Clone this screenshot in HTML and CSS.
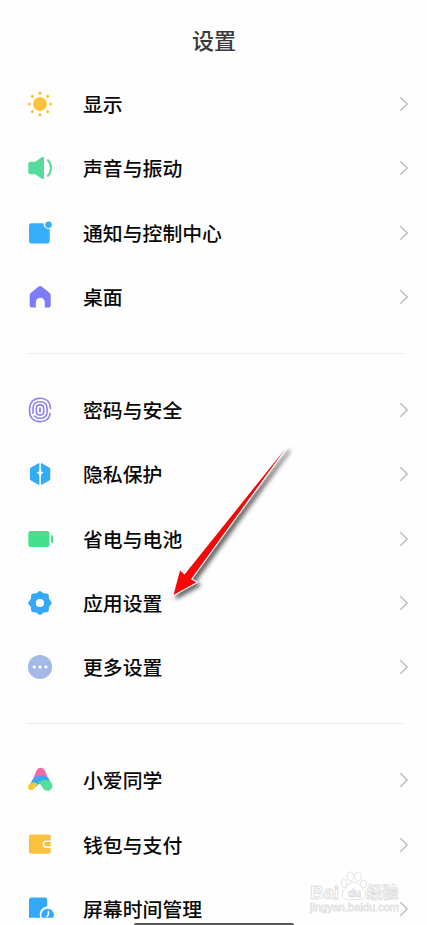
FILE: index.html
```html
<!DOCTYPE html>
<html lang="zh-CN">
<head>
<meta charset="utf-8">
<title>设置</title>
<link rel="stylesheet" href="styles.css">
</head>
<body>
<main class="screen">
  <h1 class="title">设置</h1>
  <ul class="group">
    <li class="row">
      <svg class="icon" viewBox="0 0 30 30" fill="#fcc43c"><circle cx="15" cy="15" r="7"/><circle cx="15" cy="4.2" r="1.6"/><circle cx="15" cy="25.8" r="1.6"/><circle cx="4.2" cy="15" r="1.6"/><circle cx="25.8" cy="15" r="1.6"/><circle cx="7.4" cy="7.4" r="1.6"/><circle cx="22.6" cy="7.4" r="1.6"/><circle cx="7.4" cy="22.6" r="1.6"/><circle cx="22.6" cy="22.6" r="1.6"/></svg>
      <span class="label">显示</span>
      <svg class="chevron" viewBox="0 0 10 16"><path d="M1.3 1.2 8.2 8l-6.9 6.8"/></svg>
    </li>
    <li class="row">
      <svg class="icon" viewBox="0 0 30 30"><path d="M5 8.8h5.3l6-4.4q2.7-1.6 2.7 1v19.2q0 2.6-2.7 1l-6-4.4H5q-1.7 0-1.7-1.7v-9q0-1.7 1.7-1.7z" fill="#55dc9b"/><path d="M23 7.2c3.900 4.200 3.900 11.400 0 15.600" fill="none" stroke="#55dc9b" stroke-width="2" stroke-linecap="round"/></svg>
      <span class="label">声音与振动</span>
      <svg class="chevron" viewBox="0 0 10 16"><path d="M1.3 1.2 8.2 8l-6.9 6.8"/></svg>
    </li>
    <li class="row">
      <svg class="icon" viewBox="0 0 30 30" fill="#36aef8"><path d="M6.200 5.200H18.700C18.500 8.800 20.400 11 24.700 10.800V23.200q0 2.200-2.200 2.200H6.200Q4 25.400 4 23.200V7.400q0-2.200 2.200-2.200z"/><circle cx="23.500" cy="6.800" r="3.300"/></svg>
      <span class="label">通知与控制中心</span>
      <svg class="chevron" viewBox="0 0 10 16"><path d="M1.3 1.2 8.2 8l-6.9 6.8"/></svg>
    </li>
    <li class="row">
      <svg class="icon" viewBox="0 0 30 30"><path d="M13.700 4.500q1.500-1 3 0l7.700 6.200q1.300 1 1.300 2.700v10.200q0 2-2 2h-3.900v-5.300a4.500 4.500 0 0 0-9 0v5.300H6.700q-2 0-2-2V13.400q0-1.700 1.300-2.700z" fill="#7d7cf7"/></svg>
      <span class="label">桌面</span>
      <svg class="chevron" viewBox="0 0 10 16"><path d="M1.3 1.2 8.2 8l-6.9 6.8"/></svg>
    </li>
  </ul>
  <hr class="divider">
  <ul class="group">
    <li class="row">
      <svg class="icon" viewBox="0 0 30 30" fill="none" stroke="#8d83ee" stroke-width="1.600" stroke-linecap="round"><path d="M25.500 13.500C25.300 7.200 21.500 3.300 15 3.300S4.600 7.500 4.600 14v2.200C4.600 22.500 8.500 26.600 15 26.600c5.600 0 9.300-3 10.200-8"/><path d="M8 18.200v-5C8 9 10.700 6.700 15 6.700s7.100 2.500 7.100 6.700v3c0 4.300-2.800 6.900-7.100 6.900-2.400 0-4.300-.7-5.500-2.200"/><path d="M18.700 16.500c0 2.300-1.300 3.600-3.700 3.600s-3.700-1.300-3.700-3.600v-3.100c0-2.300 1.300-3.500 3.700-3.500s3.700 1.200 3.700 3.500z"/><path d="M15 13.500v3" stroke-width="2"/></svg>
      <span class="label">密码与安全</span>
      <svg class="chevron" viewBox="0 0 10 16"><path d="M1.3 1.2 8.2 8l-6.9 6.8"/></svg>
    </li>
    <li class="row">
      <svg class="icon" viewBox="0 0 30 30"><path d="M13.500 4.200q.8-.4.800.6v5.200c-.2 2.200-1 3.100-3.100 3.600 2.200.5 2.900 1.400 3.100 3.500v8.100q0 .9-.8.500l-7.500-4.300q-1.100-.6-1.100-1.700V10.200q0-1.100 1.100-1.700zM16.700 4.200q-.8-.4-.8.600v5.200c.2 2.200 1 3.100 3.100 3.600-2.200.5-2.900 1.400-3.100 3.500v8.100q0 .9.800.5l7.500-4.300q1.100-.6 1.100-1.700V10.200q0-1.100-1.100-1.700z" fill="#33abf6"/></svg>
      <span class="label">隐私保护</span>
      <svg class="chevron" viewBox="0 0 10 16"><path d="M1.3 1.2 8.2 8l-6.9 6.8"/></svg>
    </li>
    <li class="row">
      <svg class="icon" viewBox="0 0 30 30" fill="#44e18d"><rect x="3.300" y="7" width="21.200" height="16" rx="2.500"/><path d="M26 11h.5q1.500 0 1.500 1.500v5q0 1.500-1.500 1.500H26z"/></svg>
      <span class="label">省电与电池</span>
      <svg class="chevron" viewBox="0 0 10 16"><path d="M1.3 1.2 8.2 8l-6.9 6.8"/></svg>
    </li>
    <li class="row">
      <svg class="icon" viewBox="0 0 30 30"><path transform="translate(-.8 -.25) scale(1.050)" fill-rule="evenodd" d="M13.500 3.700q1.500-1.300 3 0l1.900 1.600 3 .2q1.900.1 2 2l.2 3 1.600 2q1.800 2 0 4l-1.600 1.900-.2 3q-.1 1.900-2 2l-3 .2-1.900 1.700q-1.500 1.300-3 0l-1.900-1.700-3-.2q-1.900-.1-2-2l-.2-3-1.600-1.900q-1.800-2 0-4l1.600-2 .2-3q.1-1.900 2-2l3-.2zM15 10.600a3.900 3.900 0 1 0 0 7.800 3.900 3.900 0 1 0 0-7.800z" fill="#35a9f9"/></svg>
      <span class="label">应用设置</span>
      <svg class="chevron" viewBox="0 0 10 16"><path d="M1.3 1.2 8.2 8l-6.9 6.8"/></svg>
    </li>
    <li class="row">
      <svg class="icon" viewBox="0 0 30 30"><circle cx="15" cy="15" r="12.100" fill="#a5b9e7"/><g fill="#fff"><circle cx="9.300" cy="15" r="1.600"/><circle cx="15.100" cy="15" r="1.600"/><circle cx="20.900" cy="15" r="1.600"/></g></svg>
      <span class="label">更多设置</span>
      <svg class="chevron" viewBox="0 0 10 16"><path d="M1.3 1.2 8.2 8l-6.9 6.8"/></svg>
    </li>
  </ul>
  <hr class="divider">
  <ul class="group">
    <li class="row">
      <svg class="icon" viewBox="0 0 30 30"><path d="M6.800 17 11.300 6q1.500-3.200 4.300-3.200T20 6l4.700 11-8-2z" fill="#f768a0"/><path d="M7.800 14.300c3.300-4.700 12-5.400 15.900-.8l2 5-6.500 1.300c-3.700-2-6-1.100-8 2L4.500 20z" fill="#35aaf1"/><path d="M4.500 18.700c2.300-1.500 5.200-1.600 8.200.2l-3.300 4.300c-1.500 2-3.800 2.500-5.300 1.200-1.500-1.500-1.300-4 .4-5.700z" fill="#f6c633"/><path d="M13.500 17.600c3-3.300 8.800-3.400 11.600-1.300 3.400 2.500 3 8.300-1.100 9.400-2.200.5-4.300-.3-5.700-2-1.500-1.800-2.500-4.400-4.800-6.100z" fill="#55df9b"/></svg>
      <span class="label">小爱同学</span>
      <svg class="chevron" viewBox="0 0 10 16"><path d="M1.3 1.2 8.2 8l-6.9 6.8"/></svg>
    </li>
    <li class="row">
      <svg class="icon" viewBox="0 0 30 30"><rect x="4" y="4.500" width="21.700" height="19.300" rx="2" fill="#fac13d"/><path d="M26 11.300h-4.800a2.900 2.900 0 0 0 0 5.800H26" fill="none" stroke="#fff" stroke-width="1.600"/></svg>
      <span class="label">钱包与支付</span>
      <svg class="chevron" viewBox="0 0 10 16"><path d="M1.3 1.2 8.2 8l-6.9 6.8"/></svg>
    </li>
    <li class="row">
      <svg class="icon" viewBox="0 0 30 30"><path d="M6.500 3.500h13.200q2.500 0 2.500 2.500v6.500a7.900 7.900 0 0 0-6.700 11.300H4V6q0-2.500 2.500-2.500z" fill="#35a8fb"/><path d="M17 23.800a6.300 6.300 0 1 1 11.300 0z" fill="#35a8fb"/><path d="M23.300 16.700v4l-1.800 2.300" fill="none" stroke="#fff" stroke-width="1.500"/></svg>
      <span class="label">屏幕时间管理</span>
      <svg class="chevron" viewBox="0 0 10 16"><path d="M1.3 1.2 8.2 8l-6.9 6.8"/></svg>
    </li>
  </ul>
  <div class="home-bar"></div>
  <svg class="pointer" viewBox="0 0 160 180"><path class="arrow" d="M135.800 18.200 41 149.200l5.500 3.100L23.500 165 30 140.500l4.500 4z"/></svg>
  <svg class="watermark" viewBox="0 0 100 50">
    <text class="mark brand" x="5" y="33" textLength="29">Bai</text>
    <g class="mark"><ellipse cx="39" cy="17.500" rx="3" ry="4" transform="rotate(-15 39 17.500)"/><ellipse cx="45.500" cy="10.500" rx="3.200" ry="4.500"/><ellipse cx="53" cy="10.500" rx="3.200" ry="4.500"/><ellipse cx="58.500" cy="18" rx="3" ry="4" transform="rotate(15 58.500 18)"/><path d="M43 19q6-6 12 0 2 3 5 6 3 8-5 8.500H42q-7-1-4-8.500 3-3 5-6z"/></g>
    <text class="mark du" x="43" y="31" textLength="13">du</text>
    <text class="mark cn" x="61.500" y="32">经验</text>
    <text class="mark url" x="5" y="44.500" textLength="89">jingyan.baidu.com</text>
  </svg>
</main>
</body>
</html>
```
FILE: styles.css
```css
* { box-sizing: border-box; }
body { margin: 0; background: #fefefe; font-family: "Noto Sans CJK SC", sans-serif; }
.screen { position: relative; height: 925px; overflow: hidden; }
.title { margin: 0; height: 71.9px; padding: 8px 0 0 1px; text-align: center; font-size: 22px; line-height: 62px; font-weight: 500; color: #3a3a3a; }
.group { list-style: none; margin: 0; padding: 0; }
.row { display: flex; align-items: center; height: 64.25px; padding: 0 18px 0 25px; }
.icon { width: 30px; height: 30px; flex: none; }
.label { flex: 1; margin-left: 28px; font-size: 19.85px; line-height: 30px; font-weight: 500; color: #080808; }
.chevron { width: 10px; height: 16px; fill: none; stroke: #bdbdbd; stroke-width: 1.5; }
.divider { border: 0; height: 1px; margin: 24px 23px 24px 27px; background: #ededed; }
.home-bar { position: absolute; left: 134px; bottom: 0; width: 160px; height: 2px; border-radius: 2px 2px 0 0; background: #555; }
.pointer { position: absolute; left: 150px; top: 430px; width: 160px; height: 180px; filter: drop-shadow(3px 3px 2px #0009); }
.arrow { fill: #f60808; stroke: #fff; stroke-width: 2.4; stroke-linejoin: round; paint-order: stroke; }
.watermark { position: absolute; left: 305px; top: 866px; width: 100px; height: 50px; }
.mark { fill: #fff; stroke: #dcdcdc; stroke-width: 0.8; }
.brand { font: bold 19px "Liberation Sans", sans-serif; }
.du { font: bold 11px "Liberation Sans", sans-serif; }
.cn { font: bold 16px "Noto Sans CJK SC", sans-serif; }
.url { font: 11px "Liberation Sans", sans-serif; stroke: #e2e2e2; }
```
